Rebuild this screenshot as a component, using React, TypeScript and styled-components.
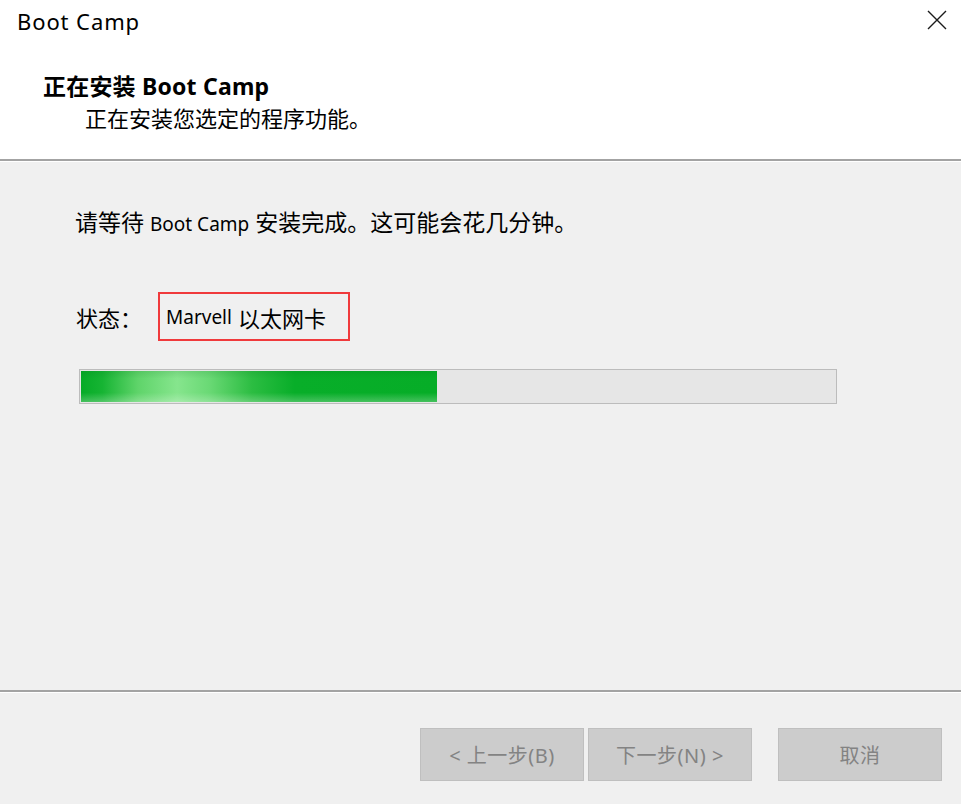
import React from "react";
import styled, { createGlobalStyle } from "styled-components";

const GlobalStyle = createGlobalStyle`
  html, body {
    margin: 0;
    padding: 0;
    background: #f0f0f0;
  }
  body {
    font-family: "Noto Sans", "Noto Sans CJK SC", sans-serif;
    color: #000;
  }
`;

const PROGRESS = 47.2;

/**
 * Boot Camp installer window
 */
export default function App() {
  return (
    <>
      <GlobalStyle />
      <Window>
        <TitleBar>
          <WindowTitle>Boot Camp</WindowTitle>
          <CloseButton aria-label="关闭">
            <svg width="20" height="20" viewBox="0 0 20 20">
              <path d="M1 1 L19 19 M19 1 L1 19" stroke="#1b1b1b" strokeWidth="1.4" fill="none" />
            </svg>
          </CloseButton>
        </TitleBar>

        <Header>
          <Heading>正在安装 Boot Camp</Heading>
          <SubHeading>正在安装您选定的程序功能。</SubHeading>
        </Header>

        <Divider />

        <Body>
          <Message>
            请等待 <Latin>Boot Camp</Latin> 安装完成。这可能会花几分钟。
          </Message>

          <StatusRow>
            <StatusLabel>状态：</StatusLabel>
            <StatusValue>
              <Latin>Marvell</Latin> 以太网卡
            </StatusValue>
          </StatusRow>

          <ProgressTrack>
            <ProgressFill style={{ width: `${PROGRESS}%` }} />
          </ProgressTrack>
        </Body>

        <Divider />

        <Footer>
          <Button disabled>&lt; 上一步(B)</Button>
          <Button disabled>下一步(N) &gt;</Button>
          <Button disabled $gap={26}>取消</Button>
        </Footer>
      </Window>
    </>
  );
}

const Window = styled.div`
  display: flex;
  flex-direction: column;
  width: 961px;
  height: 804px;
  background: #f0f0f0;
  overflow: hidden;
`;

const TitleBar = styled.div`
  display: flex;
  align-items: center;
  justify-content: space-between;
  height: 42px;
  padding: 0 13px 0 17px;
  background: #fff;
`;

const WindowTitle = styled.span`
  font-size: 22px;
  letter-spacing: 0.9px;
  line-height: 42px;
`;

const CloseButton = styled.div`
  display: flex;
  align-items: center;
  justify-content: center;
  width: 22px;
  height: 22px;
  margin-top: -2px;
`;

const Header = styled.div`
  display: flex;
  flex-direction: column;
  height: 117px;
  padding: 28px 0 0 43px;
  box-sizing: border-box;
  background: #fff;
`;

const Heading = styled.div`
  font-size: 23px;
  font-weight: 700;
  line-height: 32px;
  letter-spacing: 0.2px;
`;

const SubHeading = styled.div`
  font-size: 22px;
  line-height: 32px;
  margin-left: 42px;
`;

const Divider = styled.div`
  height: 2px;
  background: #a3a3a3;
  border-bottom: 1px solid #fff;
`;

const Body = styled.div`
  display: flex;
  flex-direction: column;
  align-items: flex-start;
  height: 528px;
  padding: 44px 0 0 75px;
  box-sizing: border-box;
`;

const Latin = styled.span`
  font-family: "Noto Sans", sans-serif;
  font-size: 19px;
`;

const Message = styled.div`
  font-size: 23px;
  line-height: 32px;
`;

const StatusRow = styled.div`
  display: flex;
  align-items: center;
  margin-top: 52px;
`;

const StatusLabel = styled.span`
  font-size: 22px;
  width: 83px;
  padding-left: 1px;
  box-sizing: border-box;
`;

const StatusValue = styled.span`
  display: flex;
  align-items: center;
  gap: 6px;
  height: 49px;
  width: 192px;
  padding-left: 6px;
  box-sizing: border-box;
  border: 2px solid #f03a3c;
  font-size: 22px;
`;

const ProgressTrack = styled.div`
  width: 758px;
  height: 35px;
  margin: 28px 0 0 4px;
  padding: 1px;
  box-sizing: border-box;
  border: 1px solid #bcbcbc;
  background: #e6e6e6;
`;

const ProgressFill = styled.div`
  height: 100%;
  background:
    linear-gradient(180deg, rgba(0, 90, 20, 0.12) 0%, rgba(255, 255, 255, 0) 25%, rgba(255, 255, 255, 0) 70%, rgba(255, 255, 255, 0.25) 100%),
    linear-gradient(90deg, #06ab27 0%, #16b433 6%, #5fd46a 16%, #86e58d 27%, #6ad975 36%, #2cbd42 48%, #08ae29 60%, #06ad27 100%);
`;

const Footer = styled.div`
  display: flex;
  justify-content: flex-end;
  align-items: flex-start;
  flex: 1;
  padding: 35px 19px 0 0;
`;

const Button = styled.button<{ $gap?: number }>`
  width: 164px;
  height: 53px;
  margin-left: ${(p) => p.$gap ?? 4}px;
  border: 1px solid #bfbfbf;
  background: #cccccc;
  color: #838383;
  font-family: "Noto Sans", "Noto Sans CJK SC", sans-serif;
  font-size: 20px;
  letter-spacing: 0.5px;
  padding: 0;
`;
